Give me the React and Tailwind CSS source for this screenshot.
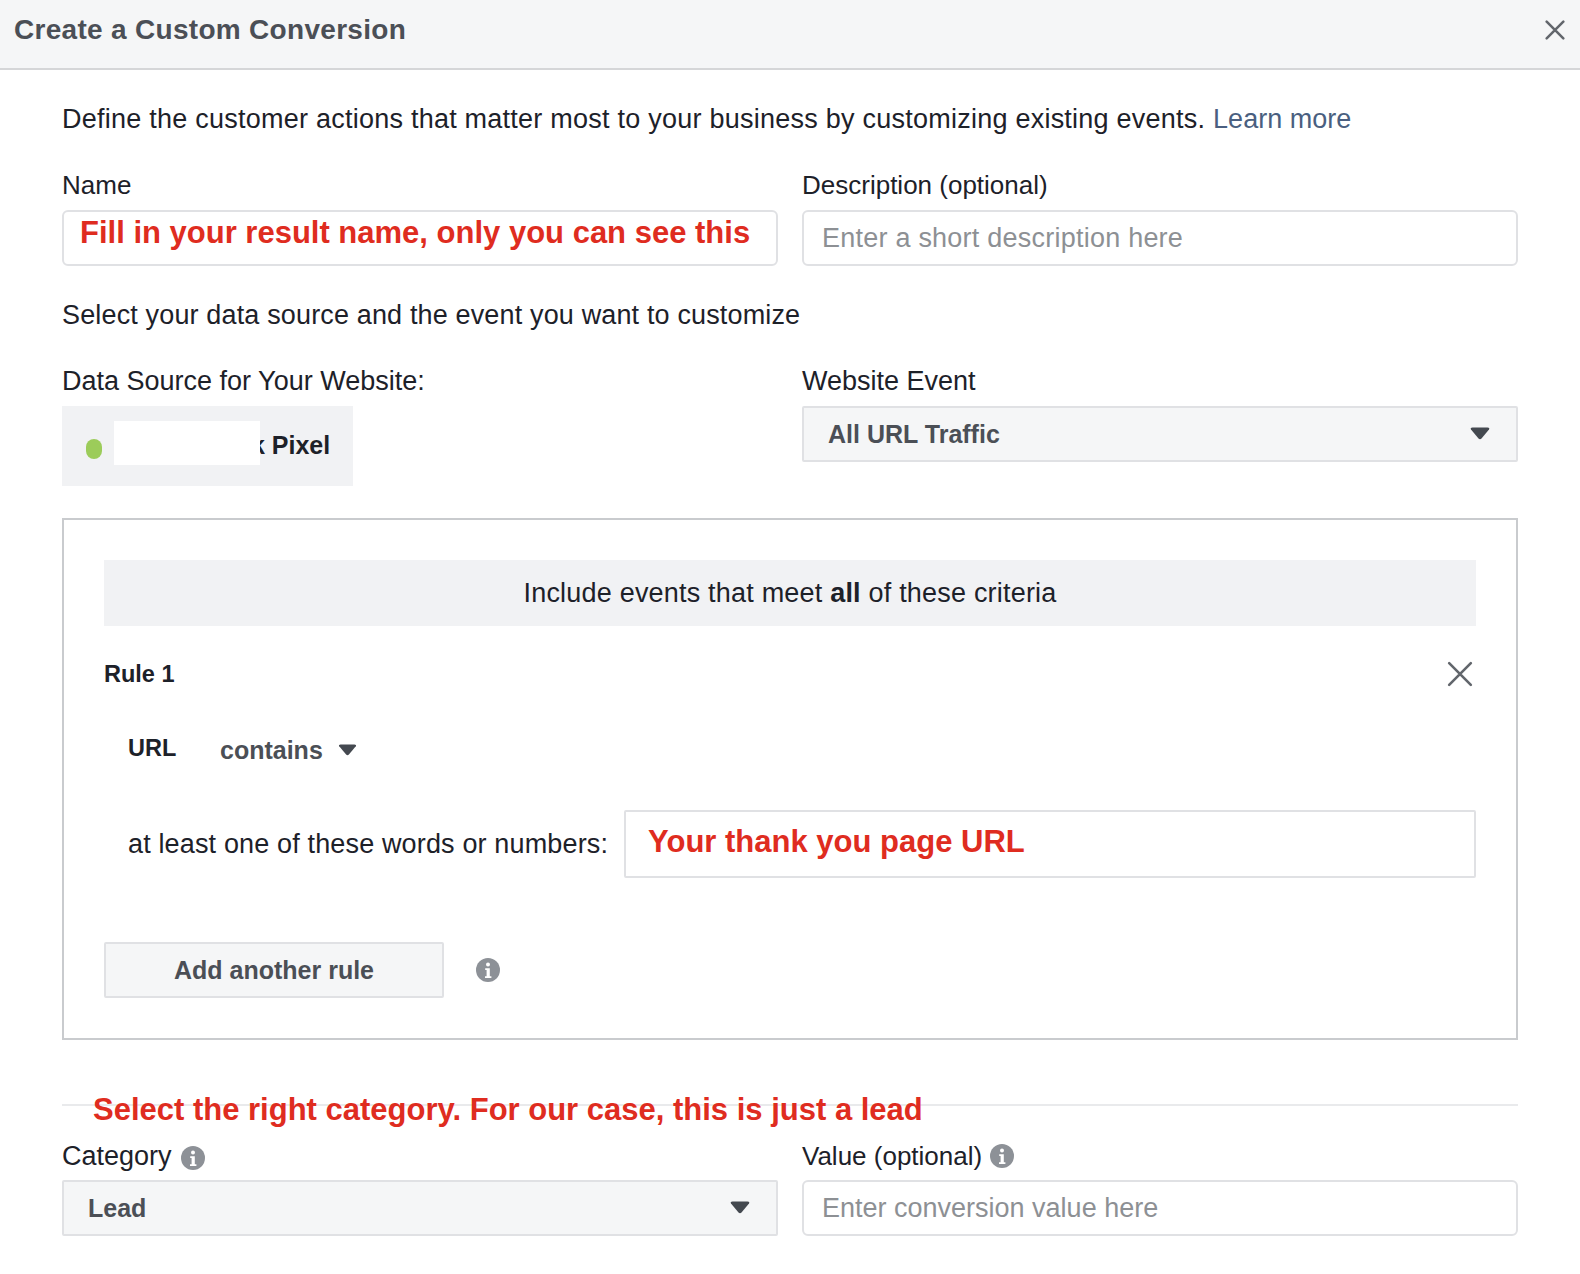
import React from 'react';

function Caret({ className }) {
  return (
    <svg viewBox="0 0 20 13" className={className} fill="#444950">
      <path d="M1 2.5 Q0 0.5 2.5 0.5 L17.5 0.5 Q20 0.5 19 2.5 L11.5 11.5 Q10 13 8.5 11.5 Z" />
    </svg>
  );
}

function Info({ className }) {
  return (
    <svg viewBox="0 0 24 24" className={className}>
      <circle cx="12" cy="12" r="12" fill="#8d9197" />
      <circle cx="12" cy="6.6" r="2" fill="#fff" />
      <path d="M9.2 10.2h4.6v8h1.6v1.8H9v-1.8h1.6v-6.2H9.2z" fill="#fff" />
    </svg>
  );
}

function Close({ className, weight = 2.2 }) {
  return (
    <svg viewBox="0 0 24 24" className={className} stroke="#62666c" strokeWidth={weight} strokeLinecap="round" fill="none">
      <path d="M2 2 22 22M22 2 2 22" />
    </svg>
  );
}

export default function App() {
  return (
    <div className="h-[1274px] bg-white text-[#1d2129] font-['Liberation_Sans',Arial,sans-serif] text-[27px] leading-[32px] overflow-hidden">
      <div className="flex items-center justify-between h-[70px] pl-[14px] pr-[15px] pb-[9px] bg-[#f5f6f7] border-b-2 border-[#d5d6d8]">
        <h1 className="text-[#4b4f56] font-bold text-[28px] tracking-[0.3px]">Create a Custom Conversion</h1>
        <Close className="w-[20px] h-[20px]" weight={3} />
      </div>

      <div className="px-[62px]">
        <p className="mt-[33px] tracking-[0.24px]">
          Define the customer actions that matter most to your business by customizing existing events.{' '}
          <a className="text-[#4a5f80] tracking-normal">Learn more</a>
        </p>

        <div className="grid grid-cols-2 gap-x-[24px] mt-[34px]">
          <div>
            <label className="block text-[26px]">Name</label>
            <div className="mt-[9px] h-[56px] pl-[16px] pt-[5px] border-2 border-[#e0e1e4] rounded-[6px] text-[#df2c20] font-bold text-[31px]">
              Fill in your result name, only you can see this
            </div>
          </div>
          <div>
            <label className="block text-[26px]">Description (optional)</label>
            <input
              readOnly
              placeholder="Enter a short description here"
              className="block w-full mt-[9px] h-[56px] px-[18px] border-2 border-[#e0e1e4] rounded-[6px] tracking-[0.23px] placeholder:text-[#8d9094]"
            />
          </div>
        </div>

        <p className="mt-[33px] tracking-[0.15px]">Select your data source and the event you want to customize</p>

        <div className="grid grid-cols-2 gap-x-[24px] mt-[34px]">
          <div>
            <label className="block">Data Source for Your Website:</label>
            <div className="mt-[9px] flex items-center w-[291px] h-[80px] pl-[24px] bg-[#f1f2f4]">
              <span className="w-[16px] h-[20px] mt-[6px] rounded-full bg-[#9ccc5a]" />
              <span className="relative z-10 w-[146px] h-[44px] ml-[12px] mb-[6px] bg-white" />
              <span className="ml-[-9px] mb-[2px] font-bold text-[25px] text-[#1d2129]">k Pixel</span>
            </div>
          </div>
          <div>
            <label className="block">Website Event</label>
            <div className="mt-[9px] flex items-center justify-between h-[56px] pl-[24px] pr-[26px] pb-[1px] bg-[#f5f6f7] border-2 border-[#e0e1e4] rounded-[2px] font-bold text-[25px] text-[#4b4f56]">
              All URL Traffic
              <Caret className="w-[20px] h-[13px]" />
            </div>
          </div>
        </div>

        <div className="mt-[32px] h-[522px] px-[40px] pt-[40px] border-2 border-[#c9cbce]">
          <div className="flex items-center justify-center h-[66px] bg-[#f1f2f4] tracking-[0.2px]">
            <span>Include events that meet <b>all</b> of these criteria</span>
          </div>

          <div className="flex items-center justify-between mt-[32px]">
            <span className="font-bold text-[23.5px]">Rule 1</span>
            <Close className="w-[26px] h-[26px] mr-[3px]" weight={2.4} />
          </div>

          <div className="flex items-center mt-[40px] pl-[24px]">
            <span className="font-bold text-[23.5px] w-[92px]">URL</span>
            <span className="font-bold text-[25px] text-[#4b4f56] mt-[4px]">contains</span>
            <Caret className="w-[19px] h-[12px] ml-[15px] mt-[4px]" />
          </div>

          <div className="flex items-center mt-[44px] pl-[24px]">
            <span className="tracking-[0.15px]">at least one of these words or numbers:</span>
            <div className="flex-1 ml-[16px] h-[68px] pl-[22px] pt-[14px] border-2 border-[#e0e1e4] rounded-[2px] text-[#df2c20] font-bold text-[31px]">
              Your thank you page URL
            </div>
          </div>

          <div className="flex items-center mt-[64px]">
            <button className="w-[340px] h-[56px] bg-[#f5f6f7] border-2 border-[#e0e1e4] rounded-[2px] font-bold text-[25px] text-[#4b4f56]">
              Add another rule
            </button>
            <Info className="w-[24px] h-[24px] ml-[32px]" />
          </div>
        </div>

        <div className="relative mt-[64px] h-[2px] bg-[#e9eaec]">
          <span className="absolute left-[31px] top-[-10px] text-[#df2c20] font-bold text-[31px] leading-[32px] whitespace-nowrap">
            Select the right category. For our case, this is just a lead
          </span>
        </div>

        <div className="grid grid-cols-2 gap-x-[24px] mt-[34px]">
          <div>
            <label className="flex items-center gap-[9px]">
              Category
              <Info className="w-[24px] h-[24px] mt-[3px]" />
            </label>
            <div className="mt-[8px] flex items-center justify-between h-[56px] pl-[24px] pr-[26px] pb-[1px] bg-[#f5f6f7] border-2 border-[#e0e1e4] rounded-[2px] font-bold text-[25px] text-[#4b4f56]">
              Lead
              <Caret className="w-[20px] h-[13px]" />
            </div>
          </div>
          <div>
            <label className="flex items-center gap-[8px] text-[26px] pb-[1px]">
              Value (optional)
              <Info className="w-[24px] h-[24px]" />
            </label>
            <input
              readOnly
              placeholder="Enter conversion value here"
              className="block w-full mt-[7px] h-[56px] px-[18px] border-2 border-[#e0e1e4] rounded-[6px] placeholder:text-[#8d9094]"
            />
          </div>
        </div>
      </div>
    </div>
  );
}
